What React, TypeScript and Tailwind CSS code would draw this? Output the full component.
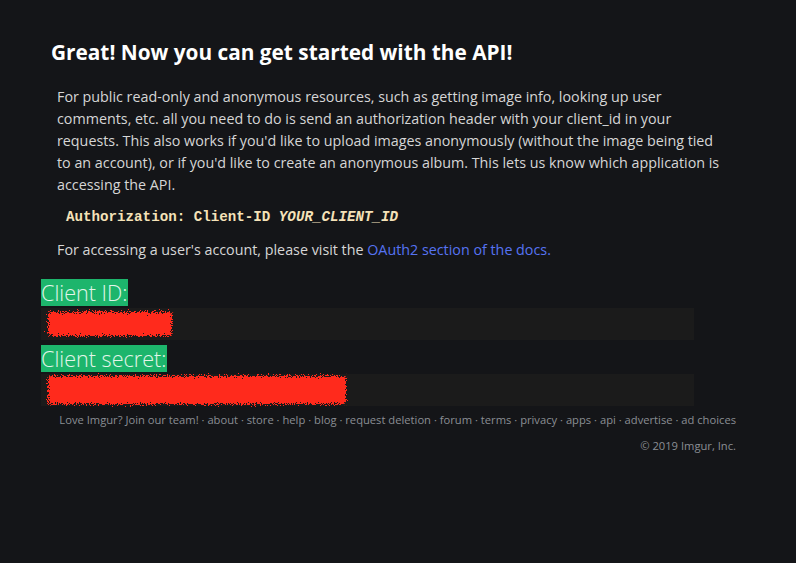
import React from "react";

const footerLinks = [
  "Love Imgur? Join our team!",
  "about",
  "store",
  "help",
  "blog",
  "request deletion",
  "forum",
  "terms",
  "privacy",
  "apps",
  "api",
  "advertise",
  "ad choices",
];

function Scribble({ width, height, seed }: { width: number; height: number; seed: number }) {
  const id = `rough-${seed}`;
  return (
    <svg width={width} height={height} viewBox={`0 0 ${width} ${height}`} className="block">
      <defs>
        <filter id={id} x="-5%" y="-20%" width="110%" height="140%">
          <feTurbulence type="fractalNoise" baseFrequency="0.9" numOctaves="3" seed={seed} result="n" />
          <feDisplacementMap in="SourceGraphic" in2="n" scale="10" xChannelSelector="R" yChannelSelector="G" />
        </filter>
      </defs>
      <g filter={`url(#${id})`}>
        <rect x="4" y="4" width={width - 8} height={height - 8} rx="3" fill="#ff2b1f" />
      </g>
    </svg>
  );
}

export default function App() {
  return (
    <main
      className="min-h-screen w-full bg-[#141518] text-[#d8d8d8]"
      style={{ fontFamily: '"Open Sans", "Noto Sans", sans-serif' }}
    >
      <div className="w-[796px] pt-[38px]">
        <h1 className="pl-[51px] text-[20.8px] font-bold leading-[28px] text-white">
          Great! Now you can get started with the API!
        </h1>

        <div className="mt-[20px] w-[725px] pl-[57px] text-[14.3px] leading-[22px] text-[#d6d6d6]">
          <p>
            For public read-only and anonymous resources, such as getting image info, looking up user comments, etc. all
            you need to do is send an authorization header with your client_id in your requests. This also works if
            you'd like to upload images anonymously (without the image being tied to an account), or if you'd like to
            create an anonymous album. This lets us know which application is accessing the API.
          </p>
          <pre
            className="mt-[11px] pl-[9px] text-[14.2px] font-bold leading-[20px] text-[#f5e2b8]"
            style={{ fontFamily: '"Liberation Mono", monospace' }}
          >
            Authorization: Client-ID <em className="italic">YOUR_CLIENT_ID</em>
          </pre>
          <p className="mt-[12px]">
            For accessing a user's account, please visit the{" "}
            <a className="text-[#5673f2]">OAuth2 section of the docs.</a>
          </p>
        </div>

        <div className="mt-[18px] pl-[41px]">
          <div className="inline-block h-[27px] bg-[#1db56c] pr-px text-[21.6px] font-light leading-[27px] text-[#e3f5ea]">
            Client ID:
          </div>
          <div className="mt-px flex h-[32px] w-[653px] items-center bg-[#1b1b1b] pl-[3px]">
            <Scribble width={132} height={32} seed={3} />
          </div>
          <div className="mt-[5px] inline-block h-[27px] bg-[#1db56c] pr-px text-[21.6px] font-light leading-[27px] text-[#e3f5ea]">
            Client secret:
          </div>
          <div className="mt-px flex h-[32px] w-[653px] items-center bg-[#1b1b1b] pl-[3px]">
            <Scribble width={306} height={36} seed={7} />
          </div>
        </div>

        <footer className="w-[736px] pt-[6px] text-right text-[11.2px] leading-[16px] text-[#8a8e94]">
          <div>
            {footerLinks.map((l, i) => (
              <span key={l}>
                {i > 0 && " · "}
                {l}
              </span>
            ))}
          </div>
          <div className="mt-[10px]">© 2019 Imgur, Inc.</div>
        </footer>
      </div>
    </main>
  );
}
